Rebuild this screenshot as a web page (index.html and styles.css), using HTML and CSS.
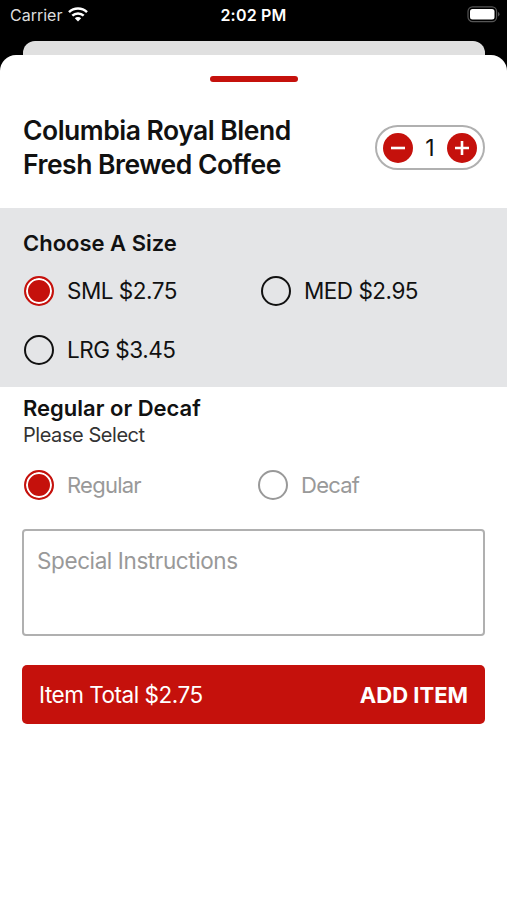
FILE: index.html
```
<!DOCTYPE html>
<html lang="en">
<head>
<meta charset="utf-8">
<title>Add Item</title>
<link rel="stylesheet" href="styles.css">
</head>
<body>
<header class="status">
  <div class="carrier"><span>Carrier</span>
    <svg class="wifi" viewBox="0 0 20 15" width="20" height="15"><g fill="none" stroke="#fff" stroke-width="2.5"><path d="M1 5.2a13 13 0 0 1 18 0"/><path d="M4.3 8.700a8.200 8.200 0 0 1 11.400 0"/></g><path d="M10 14.600 6.800 11.300a4.600 4.600 0 0 1 6.400 0z" fill="#fff"/></svg>
  </div>
  <span class="time">2:02 PM</span>
  <svg class="battery" viewBox="0 0 33 17" width="33" height="17"><rect x="1" y=".8" width="28.600" height="14.800" rx="4.600" fill="none" stroke="#555" stroke-width="1.2"/><rect x="3" y="2.900" width="24.500" height="10.600" rx="2.500" fill="#fff"/><path d="M31 6q1.500.6 1.500 2.200t-1.500 2.200z" fill="#555"/></svg>
</header>
<div class="behind"></div>
<main class="sheet">
  <div class="handle"></div>
  <section class="title-row">
    <h1>Columbia Royal Blend<br>Fresh Brewed Coffee</h1>
    <div class="stepper">
      <svg width="30" height="30" viewBox="0 0 30 30"><circle cx="15" cy="15" r="15" fill="#c5110c"/><path d="M8 15h14" stroke="#fff" stroke-width="2.6"/></svg>
      <span class="qty">1</span>
      <svg width="30" height="30" viewBox="0 0 30 30"><circle cx="15" cy="15" r="15" fill="#c5110c"/><path d="M8 15h14M15 8v14" stroke="#fff" stroke-width="2.6"/></svg>
    </div>
  </section>
  <section class="sizes">
    <h2>Choose A Size</h2>
    <div class="options">
      <div class="option"><i class="radio on"></i><span>SML $2.75</span></div>
      <div class="option"><i class="radio"></i><span>MED $2.95</span></div>
      <div class="option"><i class="radio"></i><span>LRG $3.45</span></div>
    </div>
  </section>
  <section class="kind">
    <h2>Regular or Decaf</h2>
    <p>Please Select</p>
    <div class="options muted">
      <div class="option"><i class="radio on"></i><span>Regular</span></div>
      <div class="option"><i class="radio"></i><span>Decaf</span></div>
    </div>
  </section>
  <div class="notes">Special Instructions</div>
  <div class="add"><span>Item Total $2.75</span><b>ADD ITEM</b></div>
</main>
</body>
</html>
```
FILE: styles.css
```
* { box-sizing: border-box; }
body { margin: 0; height: 900px; overflow: hidden; background: #000; color: #111; font-family: Inter, "Liberation Sans", sans-serif; }
h1, h2, p { margin: 0; }
svg { display: block; flex: none; }
.status { height: 41px; display: grid; grid-template-columns: 1fr auto 1fr; padding: 6px 7px 0 10px; color: #fff; font-size: 16px; line-height: 19px; }
.carrier { display: flex; gap: 6px; color: #ddd; }
.wifi { margin-top: 1px; }
.time { font-weight: 600; letter-spacing: 0.2px; margin-right: 3px; }
.battery { justify-self: end; }
.behind { height: 14px; margin: 0 22px 0 23px; border-radius: 12px 12px 0 0; background: #e0e0e0; }
.sheet { height: 845px; background: #fff; border-radius: 16px 16px 0 0; padding-top: 21px; }
.handle { width: 88px; height: 6px; margin: 0 auto; border-radius: 3px; background: #c5110c; }
.title-row { height: 126px; display: flex; justify-content: space-between; padding: 31px 22px 0 23px; }
h1 { font-size: 26.5px; line-height: 34px; font-weight: 600; letter-spacing: -0.5px; white-space: nowrap; }
.stepper { width: 110px; height: 45px; margin-top: 12px; border: 2px solid #b0b0b0; border-radius: 23px; display: flex; align-items: center; justify-content: space-between; padding: 0 6px; }
.qty { font-size: 23px; }
.sizes { height: 179px; background: #e4e5e7; padding: 21px 23px 0; }
h2 { font-size: 22px; line-height: 28px; font-weight: 600; }
.options { display: grid; grid-template-columns: 237px 1fr; grid-auto-rows: 59px; }
.sizes .options { margin-top: 4px; }
.option { display: flex; align-items: center; gap: 13px; padding-left: 1px; font-size: 22.5px; letter-spacing: -0.5px; }
.radio { width: 30px; height: 30px; border: 2px solid #111; border-radius: 50%; flex: none; }
.radio.on { border-color: #c5110c; background: #c5110c; box-shadow: inset 0 0 0 2px #fff; }
.kind { height: 142px; padding: 7px 23px 0; }
.kind p { font-size: 20px; line-height: 26px; letter-spacing: -0.45px; color: #333; }
.muted { grid-template-columns: 234px 1fr; margin-top: 7px; color: #999; }
.muted .option { font-size: 22px; letter-spacing: -0.75px; }
.muted .radio:not(.on) { border-color: #999; }
.notes { height: 107px; margin: 0 22px; border: 2px solid #b0b0b0; border-radius: 4px; padding: 16px 13px; font-size: 22.5px; line-height: 28px; letter-spacing: -0.4px; color: #999; }
.add { height: 59px; margin: 29px 22px 0; padding: 0 17px; background: #c5110c; color: #fff; border-radius: 5px; display: flex; justify-content: space-between; align-items: center; font-size: 22px; }
.add span { font-size: 22.5px; letter-spacing: -0.48px; }
```
